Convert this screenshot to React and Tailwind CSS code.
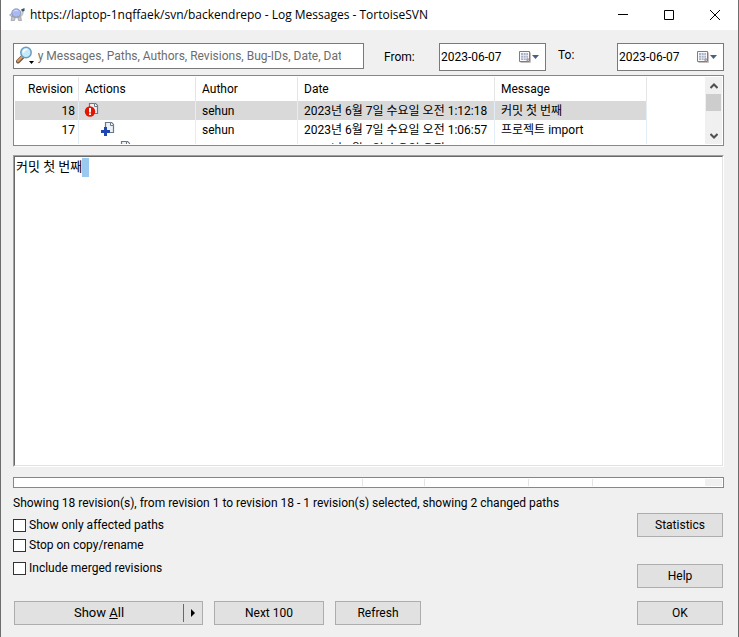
const revisions = [
  { id: "18", action: "modified", author: "sehun", date: "2023년 6월 7일 수요일 오전 1:12:18", message: "커밋 첫 번째", selected: true },
  { id: "17", action: "added", author: "sehun", date: "2023년 6월 7일 수요일 오전 1:06:57", message: "프로젝트 import" },
  { id: "", action: "", author: "", date: "2023년 6월 7일 수요일 오전", message: "" },
];

function TurtleIcon() {
  return (
    <svg className="w-4 h-4" viewBox="0 0 16 16" aria-hidden="true">
      <path d="M.5 8 2.500 6.500l2 2-2 1zM3 9l-1 4.500h3.500L6.500 10zM8.500 9.500l1 4h3L11.500 8.500z" fill="#c4c6ca" stroke="#8a8d94" strokeWidth=".6" />
      <path d="M11 8c2 0 1.200-3 2-5l2 1c-.5 2-.5 5-3.500 6z" fill="#c4c6ca" />
      <ellipse cx="7.300" cy="6" rx="4.500" ry="4.200" fill="#a9b9f5" stroke="#8189a6" strokeWidth=".8" />
      <path d="M2.800 8c2 2.500 7 2.500 9 0l-.5 2c-2 1.500-6 1.500-8 0z" fill="#a2a5ad" />
      <path d="M4.500 4.500c1.500-1.500 3.500-1.500 4.500-.5" stroke="#d5dfff" fill="none" />
      <path d="M12 2.500 15.500 1v3L13 4.500z" fill="#33566f" />
    </svg>
  );
}

function SearchIcon() {
  return (
    <svg className="w-5 h-5 shrink-0" viewBox="0 0 20 20" aria-hidden="true">
      <path d="M7 10.500 2 15.500" stroke="#70584a" strokeWidth="4" strokeLinecap="round" />
      <path d="M6.500 10.500 2 15" stroke="#e59a50" strokeWidth="2.200" strokeLinecap="round" />
      <circle cx="10" cy="6.500" r="5.200" fill="#c4ebfb" stroke="#6e9cc0" strokeWidth="1.500" />
      <path d="M7.500 6c.3-1.800 1.500-2.500 3-2.500" stroke="#fff" strokeWidth="1.600" fill="none" strokeLinecap="round" />
      <path d="M13 15h5l-2.500 3z" fill="#000" />
    </svg>
  );
}

function CalendarIcon() {
  return (
    <svg className="w-5 h-3" viewBox="0 0 20 12" aria-hidden="true">
      <path d="M1.500 11.500h10v-10" fill="none" stroke="#c5c0c0" />
      <path d="M.5.500h10v10H.5z" fill="#fafafc" stroke="#857b7b" />
      <path d="M2 2h7v7H2z" fill="#aab4c8" />
      <path d="M4.500 2v7M7 2v7M2 4.500h7M2 7h7" stroke="#eef1f6" strokeWidth=".7" />
      <path d="M8 10.500V8h2.500z" fill="#ddd" stroke="#857b7b" strokeWidth=".7" />
      <path d="M13 4h7l-3.500 4z" fill="#4a6083" />
    </svg>
  );
}

function ActionIcon({ action }) {
  return (
    <svg className="w-4 h-4" viewBox="0 0 16 16" aria-hidden="true">
      <path d="M5.500.500h6l2 2v8h-8z" fill="#edf0f5" stroke="#6b7888" strokeWidth="1.200" />
      <path d="M10.500.500v3h3" fill="#fff" stroke="#6b7888" />
      {action === "modified" && (
        <>
          <circle cx="6" cy="8.500" r="5.200" fill="#e51400" />
          <path d="M5 5h2v4.500H5zM5 10.300h2v1.700H5z" fill="#fff" />
        </>
      )}
      {action === "added" && <path d="M4 5h3v3h3v3H7v3H4v-3H1V8h3z" fill="#2046b4" />}
    </svg>
  );
}

function DateField({ id, label, className }) {
  return (
    <>
      <label htmlFor={id} className={className}>{label}</label>
      <div className="flex items-center w-[107px] h-7 border border-[#7a7a7a] bg-white pl-px pr-1.5 shrink-0">
        <input id={id} className="flex-1 min-w-0 outline-none" defaultValue="2023-06-07" />
        <button type="button" aria-label={`${label} calendar`}>
          <CalendarIcon />
        </button>
      </div>
    </>
  );
}

function Button({ children, className = "w-[86px]" }) {
  return (
    <button type="button" className={`h-6 border border-[#adadad] bg-[#e1e1e1] leading-4 ${className}`}>
      {children}
    </button>
  );
}

function Check({ children }) {
  return (
    <label className="flex items-center gap-[3px] h-5">
      <input type="checkbox" className="appearance-none w-[13px] h-[13px] border border-[#333] bg-white checked:bg-[#333]" />
      {children}
    </label>
  );
}

function RevisionTable() {
  const cell = "border-r border-[#e3edf8] px-1.5 py-0";
  const head = "border-r border-[#e5e5e5] px-1.5 py-0 font-normal text-left";
  return (
    <table className="table-fixed w-[632px] border-separate border-spacing-0 whitespace-nowrap">
      <colgroup>
        <col className="w-16" />
        <col className="w-[117px]" />
        <col className="w-[102px]" />
        <col className="w-[197px]" />
        <col className="w-[152px]" />
      </colgroup>
      <thead>
        <tr className="h-6">
          <th className="border-r border-[#e5e5e5] px-[5px] py-0 font-normal text-right">Revision</th>
          <th className={head}>Actions</th>
          <th className={head}>Author</th>
          <th className={head}>Date</th>
          <th className={head}>Message</th>
        </tr>
      </thead>
      <tbody>
        {revisions.map((rev, i) => (
          <tr key={i} className={rev.selected ? "h-[19px] bg-[#d9d9d9]" : "h-[19px]"}>
            <td className="border-r border-[#e3edf8] px-[3px] py-0 text-right">{rev.id}</td>
            <td className="border-r border-[#e3edf8] px-[5px] py-0">
              <div className="flex" style={{ paddingLeft: i * 16 }}>
                <ActionIcon action={rev.action} />
              </div>
            </td>
            <td className={cell}>{rev.author}</td>
            <td className={cell}>{rev.date}</td>
            <td className={cell}>{rev.message}</td>
          </tr>
        ))}
      </tbody>
    </table>
  );
}

function ScrollBar() {
  return (
    <div className="flex flex-col items-center w-[17px] bg-[#f0f0f0] shrink-0">
      <button type="button" aria-label="Scroll up" className="flex items-center justify-center w-full h-[17px]">
        <svg className="w-2 h-2" viewBox="0 0 8 8"><path d="m.5 6 3.500-3.500L7.500 6" fill="none" stroke="#505050" strokeWidth="2" /></svg>
      </button>
      <div className="w-[15px] h-[17px] bg-[#cdcdcd]" />
      <button type="button" aria-label="Scroll down" className="flex items-center justify-center w-full h-[17px] mt-auto">
        <svg className="w-2 h-2" viewBox="0 0 8 8"><path d="M.5 2 4 5.500 7.500 2" fill="none" stroke="#505050" strokeWidth="2" /></svg>
      </button>
    </div>
  );
}

export default function App() {
  return (
    <div className="flex flex-col min-h-screen border-x border-[#6d6d6d] bg-[#f0f0f0] text-black text-[12px] leading-4 font-['Roboto','Noto_Sans_CJK_KR',sans-serif]">
      <header className="flex items-center h-[30px] bg-white pl-2">
        <TurtleIcon />
        <h1 className="flex-1 ml-[5px] font-['Open_Sans',sans-serif]">https://laptop-1nqffaek/svn/backendrepo - Log Messages - TortoiseSVN</h1>
        <button type="button" aria-label="Minimize" className="flex items-center justify-center w-[46px] h-full">
          <svg className="w-2.5 h-2.5" viewBox="0 0 10 10"><path d="M0 4.500h10" stroke="#000" /></svg>
        </button>
        <button type="button" aria-label="Maximize" className="flex items-center justify-center w-[46px] h-full">
          <svg className="w-2.5 h-2.5" viewBox="0 0 10 10"><path d="M.5.500h9v9h-9z" fill="none" stroke="#000" /></svg>
        </button>
        <button type="button" aria-label="Close" className="flex items-center justify-center w-[46px] h-full">
          <svg className="w-2.5 h-2.5" viewBox="0 0 10 10"><path d="m0 0 10 10M10 0 0 10" stroke="#000" /></svg>
        </button>
      </header>

      <main className="flex flex-col flex-1 pl-3 pt-[13px] pb-3 pr-[14px]">
        <div className="flex items-start">
          <div className="flex items-center flex-1 h-[26px] border border-[#7a7a7a] bg-white px-0.5">
            <SearchIcon />
            <input
              aria-label="Filter"
              className="flex-1 min-w-0 ml-0.5 mr-5 outline-none -indent-[7px] placeholder:text-[#6d6d6d] placeholder:opacity-100"
              placeholder="by Messages, Paths, Authors, Revisions, Bug-IDs, Date, Dat"
            />
          </div>
          <DateField id="from" label="From:" className="w-[55px] ml-5 mt-1.5" />
          <DateField id="to" label="To:" className="w-[59px] ml-3 mt-1" />
        </div>

        <div className="flex h-[71px] mt-1 border border-[#828790] bg-white p-px">
          <div className="flex-1 overflow-hidden">
            <RevisionTable />
          </div>
          <ScrollBar />
        </div>

        <div className="relative flex flex-1 mt-[9px] border border-t-[#a0a0a0] border-l-[#a0a0a0] border-b-white border-r-white">
          <textarea
            aria-label="Log message"
            className="flex-1 resize-none outline-none bg-white text-[13px] leading-5 border border-t-[#696969] border-l-[#696969] border-b-[#e3e3e3] border-r-[#e3e3e3] px-px min-h-40"
            defaultValue="커밋 첫 번째"
          />
          <span className="absolute left-[68px] top-0.5 w-[7px] h-[19px] bg-[#99c9ef]" />
        </div>

        <div className="flex h-[11px] mt-2.5 border border-[#828790] bg-white p-px">
          <div className="w-[348px] border-r border-[#e5e5e5]" />
          <div className="w-[62px] border-r border-[#e5e5e5]" />
          <div className="w-[104px] border-r border-[#e5e5e5]" />
          <div className="w-16 border-r border-[#e5e5e5]" />
          <div className="w-[17px] ml-auto bg-[#f0f0f0]" />
        </div>

        <p className="mt-[7px]">Showing 18 revision(s), from revision 1 to revision 18 - 1 revision(s) selected, showing 2 changed paths</p>

        <div className="flex justify-between mt-0.5 pr-px">
          <div className="flex flex-col pt-0.5">
            <Check>Show only affected paths</Check>
            <Check>Stop on copy/rename</Check>
            <div className="mt-[3px]">
              <Check>Include merged revisions</Check>
            </div>
          </div>
          <div className="flex flex-col justify-between h-[75px]">
            <Button>Statistics</Button>
            <Button>Help</Button>
          </div>
        </div>

        <div className="flex gap-[11px] mt-[13px] px-px">
          <div className="flex items-center w-[189px] h-6 border border-[#adadad] bg-[#e1e1e1]">
            <button type="button" className="flex-1 text-[13px]">
              Show <u>A</u>ll
            </button>
            <button type="button" aria-label="More" className="flex items-center justify-center w-[19px] h-[18px] border-l border-[#696969]">
              <svg className="w-1 h-2" viewBox="0 0 4 8"><path d="M0 0v8l4-4z" /></svg>
            </button>
          </div>
          <Button className="w-[110px]">Next 100</Button>
          <Button>Refresh</Button>
          <Button className="w-[86px] ml-auto">OK</Button>
        </div>
      </main>
    </div>
  );
}
